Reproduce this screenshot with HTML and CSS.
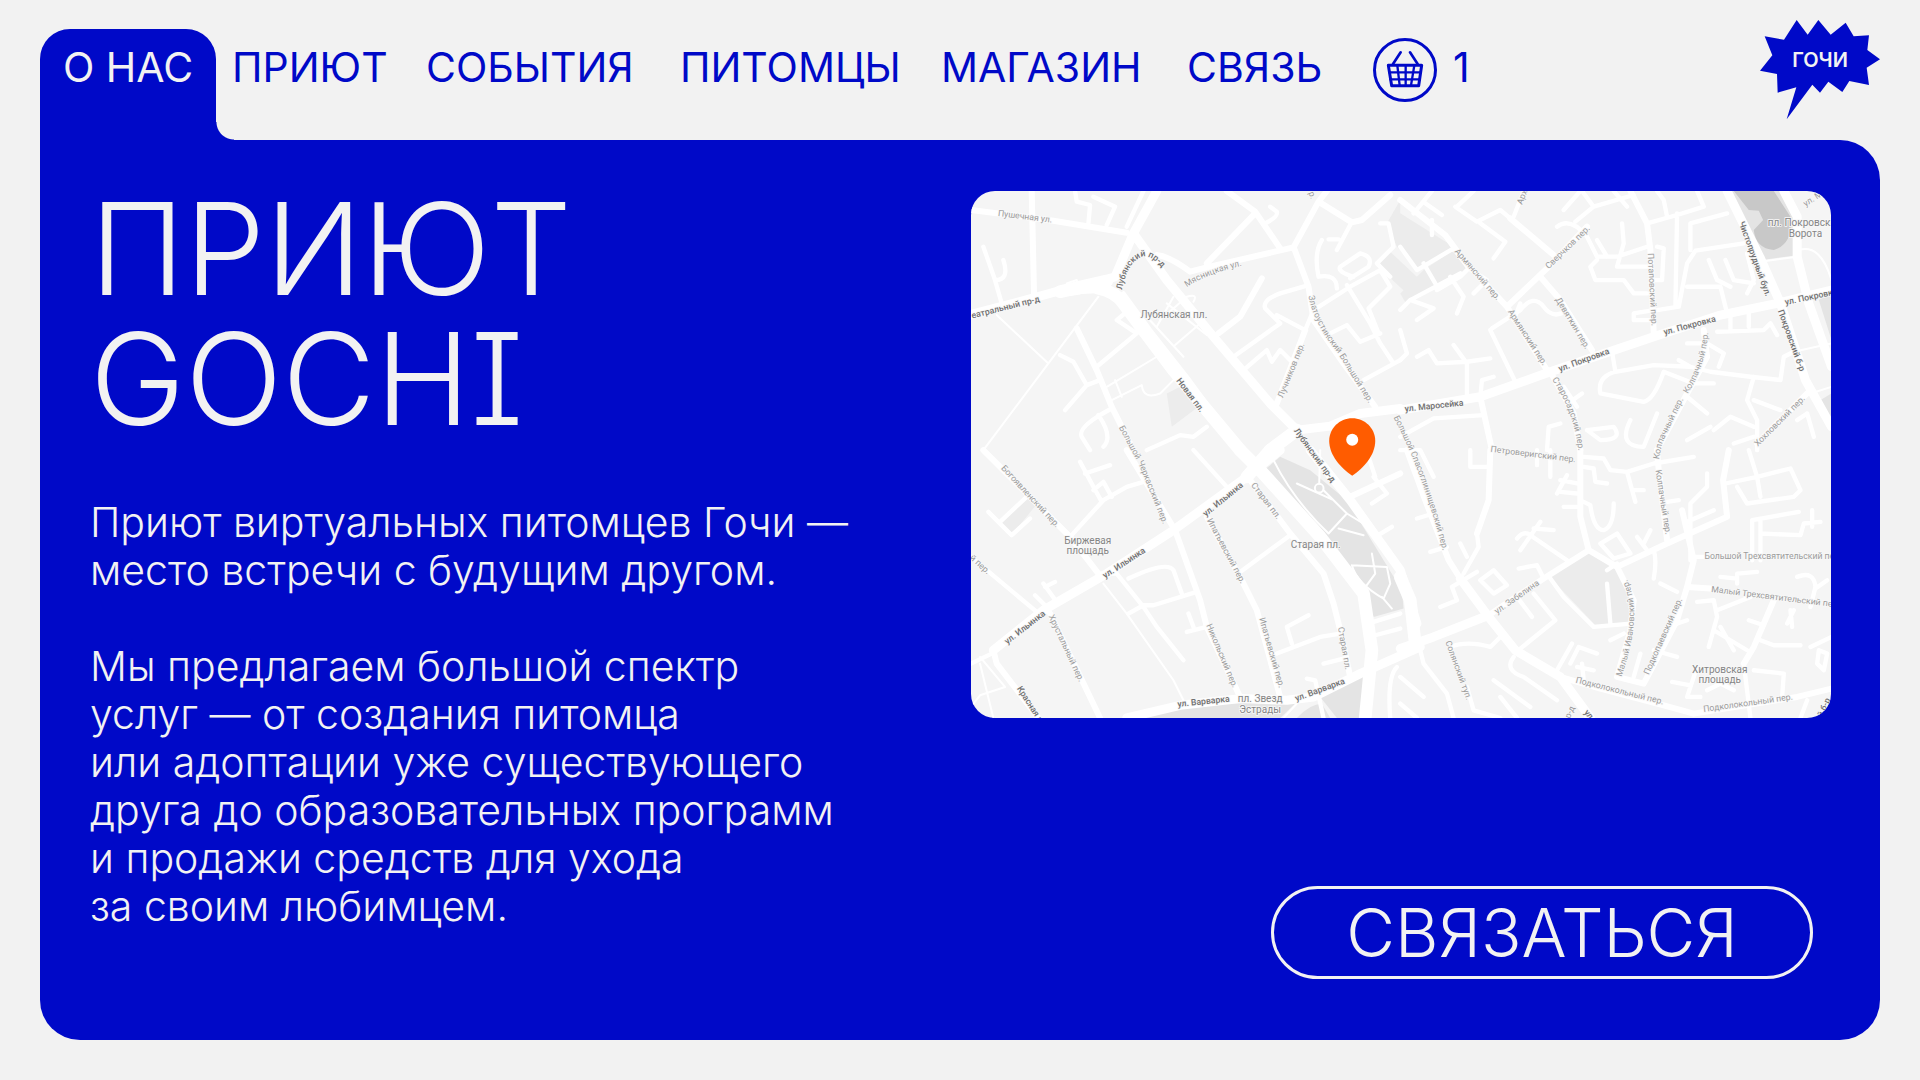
FILE: index.html
```html
<!DOCTYPE html>
<html lang="ru">
<head>
<meta charset="utf-8">
<meta name="viewport" content="width=device-width, initial-scale=1">
<title>Приют Gochi — О нас</title>
<link rel="stylesheet" href="styles.css">
</head>
<body>
<header class="header">
  <nav class="nav">
    <a class="nav-link nav-link--active" href="#about">О НАС</a>
    <a class="nav-link" href="#shelter">ПРИЮТ</a>
    <a class="nav-link" href="#events">СОБЫТИЯ</a>
    <a class="nav-link" href="#pets">ПИТОМЦЫ</a>
    <a class="nav-link" href="#shop">МАГАЗИН</a>
    <a class="nav-link" href="#contact">СВЯЗЬ</a>
    <a class="cart" href="#cart">
      <svg class="cart-icon" viewBox="0 0 192 192" fill="none" stroke="currentColor" stroke-linecap="round" stroke-linejoin="round">
        <circle cx="96" cy="96" r="91.500" stroke-width="9"/>
        <path d="M60 78 83 43M134 78 111 43" stroke-width="8"/>
        <path d="M46 82H146L137 143H56Z" stroke-width="9"/>
        <path d="M49 103H143M52 124H140M73 82 80 142M98 82V142M124 82 114 142" stroke-width="7"/>
      </svg>
      <span class="cart-count">1</span>
    </a>
  </nav>
  <a class="logo" href="#home">
    <svg class="logo-image" viewBox="0 0 360 300">
      <path class="logo-burst" d="M110 0 143 44 175 0 212 44 257 8 281 49 327 46 322 90 360 118 320 143 327 195 268 183 247 216 205 185 180 218 157 194 80 298 109 202 53 218 51 162 0 152 37 106 14 49 72 59Z"/>
      <text class="logo-text" x="180" y="141" text-anchor="middle">ГОЧИ</text>
    </svg>
  </a>
</header>

<main class="panel">
  <section class="about">
    <h1 class="title">ПРИЮТ<br>GOCHI</h1>
    <p class="text">Приют виртуальных питомцев Гочи —<br>место встречи с будущим другом.</p>
    <p class="text">Мы предлагаем большой спектр<br>услуг — от создания питомца<br>или адоптации уже существующего<br>друга до образовательных программ<br>и продажи средств для ухода<br>за своим любимцем.</p>
  </section>

  <section class="side">
    <svg class="map" viewBox="0 0 2580 1581" preserveAspectRatio="xMidYMid slice" role="img" aria-label="Карта">
      <!-- areas -->
      <g transform="translate(-33 -33)">
        <path class="lot" d="M620 640 660 620 715 680 635 740ZM1255 240 1290 215 1380 300 1340 340 1270 275ZM1280 130 1320 60 1320 100 1480 200 1380 270 1310 200ZM1390 270 1480 210 1525 265 1340 375 1320 340Z"/>
        <path class="park" d="M2310 33H2480L2515 110V225L2405 240ZM2575 360 2613 330V480ZM2580 660 2613 640V730Z"/>
        <path class="pond" d="M2320 33H2440L2490 110Q2500 190 2440 210Q2385 205 2380 150L2408 120 2395 92 2365 90Z"/>
      </g>
      <g transform="translate(-33 777)">
        <path class="park" d="M900 70 960 20 1050 60 1160 150 1325 420 1330 475 1240 500 1210 430ZM540 803 700 762 1010 755 960 803ZM1080 740 1225 665 1200 803H1130ZM1010 803Q1050 760 1085 760L1110 803Z"/>
        <path class="lot" d="M120 215 190 145 240 150 155 255ZM1765 380 1885 305 1970 355 2025 440 2010 520 1910 530 1820 435Z"/>
      </g>

      <!-- streets, north-west -->
      <g class="road" transform="translate(-33 -33)">
        <path class="w4" d="M440 303 300 335M415 325Q465 335 490 370L640 570 840 810M1010 750 930 810"/>
        <path class="w3" d="M33 403 160 370 300 332 420 325M590 33 520 160 465 290 400 310M520 160 620 300 760 470 930 670 1010 750M1010 750 1110 738 1200 700 1320 685"/>
        <path class="w2" d="M33 90 280 122 500 158M590 225Q630 230 690 275L740 262 1000 202 1075 65 1100 33M1075 65 1175 127 1205 120 1290 45M1000 200 1045 320 1060 420 1150 550 1245 680M800 33 885 95 960 205M740 250 885 100M1035 450 950 670M350 445 410 570 455 680 520 810M905 295 840 410 775 460M215 33 222 345"/>
        <path class="w1" d="M550 33 500 140M490 340 570 450 680 590 790 740M1175 125 1130 210M1105 178H1135M915 130Q955 110 950 95L930 80M1085 180Q1060 220 1075 290 1130 280 1130 325M1045 315 960 340Q905 360 915 385L960 430 820 530M950 405 1035 450 1060 390 1170 320 1260 270 1290 320 1225 385 1255 460M1260 460 1200 485 1160 435 1110 460M1160 315 1230 430 1260 490 1300 550M1210 600 1320 540M1180 290Q1130 275 1140 260L1200 220Q1240 230 1225 260L1170 295M850 570 920 510 935 545 960 510 990 540M70 200 105 300 125 370M105 300Q150 300 130 240M410 560 530 460 470 420 500 395M300 525 340 545 380 615 315 690M380 615 420 600M455 685Q350 740 365 770L390 810M415 705Q460 770 430 800M560 810 660 765 700 770 740 740M345 33 350 65 390 75 385 130M400 50 465 80 440 135M1260 130 1285 130 1300 200 1250 250 1290 290"/>
        <path class="w0" d="M110 405 265 550M415 350 265 550 70 810M440 620 590 530M465 600 485 650M455 660 545 615Q550 660 600 640L640 600M590 440 640 350M620 370 740 465M645 495 720 430M600 420 680 350Q715 340 700 365M320 310 350 300 360 340 330 345ZM560 410 670 530"/>
      </g>

      <!-- streets, north-east -->
      <g class="road" transform="translate(1287 -33)">
        <path class="w3" d="M0 690 240 650 450 575 760 470 960 405 1130 370 1293 330M980 33 1080 235 1140 370 1215 600 1293 740M1150 33 1190 110V230L1225 370 1293 560"/>
        <path class="w2" d="M0 60 135 165 190 240 320 380 440 570M320 380 440 265 560 140M330 115 460 225M420 290 480 360 575 510M690 33 740 130 750 210 760 460M240 650 275 810M450 575 520 700 540 810M910 450 920 530 860 640 770 810M1220 640 1070 790"/>
        <path class="w1" d="M0 200 50 270 160 205M0 390 30 360 180 280M40 100 95 33M75 70 125 105M95 120V165M165 80 230 125 300 90 330 115M340 110 370 33M240 130 315 185 280 235M220 33 170 80M160 205 205 265 180 290 110 330M150 290 190 350 170 400M205 265 260 300 220 340M70 250 105 310M30 360 100 385 50 420M470 140Q510 110 560 170L590 230H650L740 200M590 240 570 260 585 300H670L700 340H740M490 90 540 33M525 125 580 80 545 33M580 80 700 45M640 33 680 80M665 130 670 190 650 260H740M740 130 830 105 910 80 890 33M830 100 825 380M770 33 790 60 800 110M770 200 790 205 785 300H760M770 390 835 380 860 250 885 212 1030 190M870 210V130L980 100M860 320H960L980 400M925 240 950 300 990 320M975 240 1000 300 1060 310M1040 220 1060 300 1040 340M760 390 700 400V420H760M270 450 345 605M275 445 360 390Q400 340 430 380 460 420 500 390M340 420 360 370M200 655V545M50 530 85 510 110 550 200 545 270 535M160 495 200 550M240 650 245 600 280 590M0 540 20 520 0 450M0 770 100 715 250 705M635 515 645 575 760 555 870 560 930 575 1050 590 1140 600 1150 530 1180 515M645 575Q590 590 600 640L730 665Q760 660 790 575L880 610 940 610M835 540 870 560M860 490H920L970 520 955 560M860 650 920 700M1060 590 1040 660 1070 720V810M1060 660 1140 690M950 455 1090 450 1110 430 1130 465M990 400V450M1045 400V440M440 810 445 740 480 730M560 750 640 740Q670 780 600 780L560 750M690 720Q650 800 730 800L770 700M490 620 530 680M510 665 545 640M930 740 860 780M940 750 990 710 1060 740M1000 790 1060 770M1220 700 1190 720M1220 700 1240 770M590 180 620 230"/>
        <path class="w0" d="M1080 245 1190 230M1180 515 1293 490M1195 210Q1260 190 1293 300M1230 640 1293 620"/>
      </g>

      <!-- streets, south-west -->
      <g class="road" transform="translate(-33 777)">
        <path class="w4" d="M840 0 900 60 1080 260 1210 430 1235 600 1215 803M930 0 860 80"/>
        <path class="w3" d="M960 0 860 80 640 240 440 370 250 480 100 600M1050 0 1170 150 1320 360 1370 520M500 803 660 765 840 745 980 750 1060 740 1200 670 1380 590"/>
        <path class="w2" d="M100 600 110 640 235 803M500 0 560 100 645 240 720 450 740 530 840 740M70 0 330 260 415 370M740 200 850 400 890 480 960 740M870 90 990 250 1090 370 1120 460 1140 540 1170 680M270 490 420 803M1170 140 1320 70"/>
        <path class="w1" d="M33 320 230 485M33 640 95 610M330 260 430 150 500 110 550 95M360 35 400 110 425 155M375 70 450 45M400 120 430 95 455 140M85 185 155 255 210 205M120 215 200 140M415 370 470 370 550 470 590 530 670 630M505 385Q620 330 640 360L665 430M505 490 550 465H580L710 425M680 545 740 530M700 530 685 490M700 0 800 110M840 365 990 255M1240 80 1280 130 1235 160M1225 20 1245 80M1245 260 1295 230M950 610 1080 560 1140 550M995 580 980 530 1045 495M1090 640 1150 625M250 400 290 455M225 435 255 465M255 410 285 395M1240 515 1320 490M1245 555 1320 535M1040 685 1065 690 1090 803M1310 650Q1280 680 1290 803"/>
        <path class="w0" d="M430 400 500 490 640 690 670 750M60 640 100 803M60 620 135 710 60 735 33 770M940 30Q1000 150 1105 250L1160 190 1120 150 1010 100M1080 0 1077 100M1090 120 1160 190 1210 220M1135 235 1210 255M1175 345 1280 350 1290 400 1270 445Q1190 400 1175 345M1205 425 1245 370 1235 310M1265 440 1295 475M970 803 1010 760"/>
        <circle class="w0" cx="1077" cy="114" r="13"/>
      </g>

      <!-- streets, south-east -->
      <g class="road" transform="translate(1287 777)">
        <path class="w4" d="M0 380 30 450 45 580"/>
        <path class="w3" d="M0 595 100 560 265 495M180 385 265 500 345 600 480 680 570 803"/>
        <path class="w2" d="M265 495 430 385 565 300 650 350 800 280 980 200 968 90 985 0M20 0 75 150 145 330 180 385M270 0 265 150 230 250M540 0V200L565 300M650 350 700 450 690 540 650 680 730 700M845 180 880 330 860 410 830 510 730 700M480 680 600 715 790 765 880 790 1190 740 1293 715M1030 640 1060 590 1120 450M770 0 775 60 800 270M860 410 930 415"/>
        <path class="w1" d="M230 250 235 290 190 370M180 280 200 320M210 0V50H260M50 205 100 190M90 305 140 290M0 0 60 0 100 80M550 20 610 25 630 60 680 65 760 40 880 20M680 65 695 120 730 120M695 120 705 155M550 50 580 55 585 95 620 100M480 90 530 100M470 130 500 75M480 125 530 130M490 170H530M550 155 570 165Q580 240 610 240 640 230 640 160M350 265Q370 240 390 255L500 330M360 300 420 215M400 235 460 240M600 280 650 250 690 310 640 325ZM620 360 650 340M710 260 740 300M730 280 750 240M760 300Q770 330 760 385M860 215 940 180M870 330V160L920 110V70M800 155 835 150M975 100 1070 80 1170 55 1200 120 1180 140 1040 160 1010 110M1045 0 1070 80 1080 140M1055 330V210L1195 185M1080 210V330M1080 250 1200 255 1210 220 1260 215M1235 180V230M960 380 1010 385M1010 400V370L1070 365M1190 380Q1240 360 1245 410L1230 470M1245 415 1280 390M780 400 830 425M890 455 940 450 950 500 925 590M940 540 1040 600M960 530 1000 600M950 480 1050 440M1045 510 1090 525M1080 570 1120 585H1200M1170 480 1175 530M1160 520 1180 480M880 320H910M355 355 410 345 430 385M450 385 490 440 580 530 690 520M620 400 630 520M400 430 465 510 360 595M350 440 395 500M120 470 170 450 155 410 230 365M240 390 280 360 320 405 280 430ZM150 590Q200 570 270 590L300 560M340 620Q310 660 370 680L470 750M60 600 70 640 140 730 160 803M0 680 70 740M0 760 50 803M200 710 220 780 300 803M280 690 390 770M300 740 350 803M470 660 515 580M510 640 535 590 590 610M545 640 550 690M530 650 580 660M630 570 670 550M720 610 700 680M800 530 860 510M760 600 830 620M815 695 870 705M890 650 860 740 900 740M920 720 960 700 1000 720M1060 660 1150 670 1145 740M1030 640 1050 803M1250 640 1255 600 1280 610 1270 660ZM1230 590 1293 560M1200 803 1220 750M450 0V80M410 0V45"/>
      </g>

      <!-- street names -->
      <g class="label">
        <g transform="translate(-33 -33)">
          <text transform="translate(113 108) rotate(7)">Пушечная ул.</text>
          <text class="main" transform="translate(37 415) rotate(-14)">еатральный пр-д</text>
          <path id="lub" class="guide" d="M486 330Q500 250 545 230 575 222 612 272"/>
          <text class="main"><textPath href="#lub">Лубянский пр-д</textPath></text>
          <path id="mya" class="guide" d="M680 322Q740 280 860 254"/>
          <text><textPath href="#mya">Мясницкая ул.</textPath></text>
          <text class="place" x="541" y="415">Лубянская пл.</text>
          <text class="main" transform="translate(648 602) rotate(53)">Новая пл.</text>
          <path id="zla" class="guide" d="M1045 348Q1060 430 1130 515L1250 710"/>
          <text><textPath href="#zla">Златоустинский Большой пер.</textPath></text>
          <text transform="translate(968 655) rotate(-68)">Лучников пер.</text>
          <text class="main" transform="translate(1000 752) rotate(54)">Лубянский пр-д</text>
          <text transform="translate(1045 38) rotate(70)">р.</text>
          <path id="che" class="guide" d="M476 742 535 850 620 1060"/>
          <text><textPath href="#che">Большой Черкасский пер.</textPath></text>
          <path id="spa" class="guide" d="M1300 712Q1390 880 1455 1140"/>
          <text><textPath href="#spa">Большой Спасоглинищевский пер.</textPath></text>
        </g>
        <g transform="translate(1287 -33)">
          <text transform="translate(162 215) rotate(49)">Армянский пер.</text>
          <text transform="translate(322 395) rotate(57)">Армянский пер.</text>
          <text transform="translate(445 268) rotate(-44)">Сверчков пер.</text>
          <text transform="translate(465 358) rotate(59)">Девяткин пер.</text>
          <text transform="translate(742 220) rotate(87)">Потаповский пер.</text>
          <text class="main" transform="translate(14 695) rotate(-6)">ул. Маросейка</text>
          <text class="main" transform="translate(478 575) rotate(-20)">ул. Покровка</text>
          <text class="main" transform="translate(792 465) rotate(-15)">ул. Покровка</text>
          <text class="main" transform="translate(1155 375) rotate(-12)">ул. Покровка</text>
          <text class="main" transform="translate(1015 128) rotate(70)">Чистопрудный бул.</text>
          <text class="main" transform="translate(1132 393) rotate(70)">Покровский б-р</text>
          <path id="sta" class="guide" d="M455 598Q525 700 536 830"/>
          <text><textPath href="#sta">Старосадский пер.</textPath></text>
          <path id="kol" class="guide" d="M862 642Q920 550 925 435"/>
          <text><textPath href="#kol">Колпачный пер.</textPath></text>
          <path id="kop" class="guide" d="M776 838 785 790 860 635"/>
          <text><textPath href="#kop">Колпачный пер.</textPath></text>
          <text transform="translate(1072 800) rotate(-45)">Хохловский пер.</text>
          <text transform="translate(365 75) rotate(-68)">Арх</text>
          <text transform="translate(1215 80) rotate(-32)">ул. Макаренко</text>
          <text class="place" x="1102" y="139">пл. Покровские</text>
          <text class="place" x="1165" y="171">Ворота</text>
        </g>
        <g transform="translate(-33 777)">
          <text transform="translate(122 55) rotate(47)">Богоявленский пер.</text>
          <text class="place" x="383" y="280" text-anchor="middle">Биржевая</text>
          <text class="place" x="383" y="312" text-anchor="middle">площадь</text>
          <text transform="translate(28 325) rotate(42)">й пер.</text>
          <text class="main" transform="translate(435 385) rotate(-33)">ул. Ильинка</text>
          <text class="main" transform="translate(737 200) rotate(-39)">ул. Ильинка</text>
          <text class="main" transform="translate(142 583) rotate(-38)">ул. Ильинка</text>
          <text transform="translate(265 498) rotate(65)">Хрустальный пер.</text>
          <text class="main" transform="translate(170 715) rotate(57)">Красная пл.</text>
          <text transform="translate(872 105) rotate(53)">Старая пл.</text>
          <text class="place" x="992" y="294">Старая пл.</text>
          <text transform="translate(740 210) rotate(62)">Ипатьевский пер.</text>
          <text transform="translate(897 505) rotate(74)">Ипатьевский пер.</text>
          <text transform="translate(738 525) rotate(67)">Никольский пер.</text>
          <text transform="translate(1133 532) rotate(80)">Старая пл.</text>
          <text class="main" transform="translate(653 770) rotate(-6)">ул. Варварка</text>
          <text class="main" transform="translate(1008 753) rotate(-20)">ул. Варварка</text>
          <text class="place" x="900" y="756" text-anchor="middle">пл. Звезд</text>
          <text class="place" x="900" y="788" text-anchor="middle">Эстрады</text>
        </g>
        <g transform="translate(1287 777)">
          <text transform="translate(270 5) rotate(7)">Петроверигский пер.</text>
          <text transform="translate(290 492) rotate(-35)">ул. Забелина</text>
          <text transform="translate(765 60) rotate(81)">Колпачный пер.</text>
          <text x="912" y="325">Большой Трехсвятительский пер.</text>
          <text transform="translate(932 425) rotate(7)">Малый Трехсвятительский пер.</text>
          <path id="iva" class="guide" d="M663 680Q735 480 672 372"/>
          <text><textPath href="#iva">Малый Ивановский пер.</textPath></text>
          <text transform="translate(745 675) rotate(-66)">Подкопаевский пер.</text>
          <text transform="translate(135 575) rotate(70)">Солянский туп.</text>
          <text transform="translate(525 697) rotate(14)">Подколокольный пер.</text>
          <text transform="translate(910 785) rotate(-8)">Подколокольный пер.</text>
          <text class="place" x="958" y="668" text-anchor="middle">Хитровская</text>
          <text class="place" x="958" y="699" text-anchor="middle">площадь</text>
          <text transform="translate(508 806) rotate(-65)">р-д</text>
          <text class="main" transform="translate(550 787) rotate(50)">ул.</text>
          <text class="main" transform="translate(1265 802) rotate(-65)">й б-р</text>
        </g>
      </g>

      <!-- location pin -->
      <path class="pin" d="M1143 681C1181 681 1212 711 1212 749C1212 793 1176 832 1143 854C1110 832 1074 793 1074 749C1074 711 1105 681 1143 681Z"/>
      <circle class="pin-dot" cx="1143" cy="746" r="18"/>
    </svg>
    <button class="contact" type="button">СВЯЗАТЬСЯ</button>
  </section>
</main>
</body>
</html>
```
FILE: styles.css
```css
:root {
  --blue: #0009c8;
  --paper: #f2f2f2;
}

* {
  box-sizing: border-box;
}

body {
  margin: 0;
  min-height: 100vh;
  display: flex;
  flex-direction: column;
  padding: 0 40px 40px;
  background: var(--paper);
  color: var(--blue);
  font-family: Inter, "Liberation Sans", sans-serif;
}

a {
  color: inherit;
  text-decoration: none;
}

/* Header */
.header {
  display: flex;
  justify-content: space-between;
  height: 140px;
}

.nav {
  display: grid;
  grid-template-columns: 192px 194px 254px 261px 246px 186px auto;
  padding-top: 29px;
}

.nav-link {
  padding-top: 14px;
  font-size: 41px;
  line-height: 48px;
  white-space: nowrap;
}

.nav-link--active {
  position: relative;
  width: 176px;
  text-align: center;
  border-radius: 30px 30px 0 0;
  background: var(--blue);
  color: var(--paper);
}

/* inner corner between the tab and the panel */
.nav-link--active::after {
  content: "";
  position: absolute;
  left: 100%;
  bottom: 0;
  width: 18px;
  height: 18px;
  background: radial-gradient(circle at 100% 0, transparent 17px, var(--blue) 18px);
}

.cart {
  display: flex;
  align-items: flex-start;
  gap: 16px;
  padding-top: 9px;
}

.cart-icon {
  width: 64px;
  height: 64px;
}

.cart-count {
  padding-top: 5px;
  font-size: 41px;
  line-height: 48px;
}

.logo {
  padding-top: 20px;
}

.logo-image {
  display: block;
  width: 120px;
  height: 100px;
}

.logo-burst {
  fill: var(--blue);
}

.logo-text {
  fill: var(--paper);
  font-size: 60px;
  font-weight: 600;
}

/* Panel */
.panel {
  flex: 1;
  display: grid;
  grid-template-columns: 1fr 1fr;
  column-gap: 20px;
  padding: 44px 49px 61px 50px;
  border-radius: 0 40px 40px 40px;
  background: var(--blue);
  color: var(--paper);
}

.title {
  margin: 0 0 54px;
  font-size: 128px;
  font-weight: 300;
  line-height: 130px;
  font-feature-settings: "cv08";
}

.text {
  margin: 0 0 48px;
  font-size: 41px;
  font-weight: 300;
  line-height: 48px;
  white-space: nowrap;
}

.side {
  display: flex;
  flex-direction: column;
  justify-content: space-between;
  align-items: flex-end;
  padding-top: 7px;
}

.contact {
  min-width: 542px;
  height: 93px;
  margin-right: 18px;
  padding: 0 60px;
  border: 3px solid var(--paper);
  border-radius: 48px;
  background: none;
  color: inherit;
  font-family: inherit;
  font-size: 67px;
  font-weight: 300;
  line-height: 80px;
  cursor: pointer;
}

/* Map */
.map {
  display: block;
  width: 100%;
  aspect-ratio: 860 / 527;
  border-radius: 24px;
  background: #f5f5f5;
}

.lot { fill: #ececec; }
.park { fill: #e4e4e4; }
.pond { fill: #c8c8c8; }

.road {
  fill: none;
  stroke: #fff;
  stroke-linecap: round;
  stroke-linejoin: round;
}

.w0 { stroke-width: 6px; }
.w1 { stroke-width: 13px; }
.w2 { stroke-width: 18px; }
.w3 { stroke-width: 27px; }
.w4 { stroke-width: 38px; }

.label {
  fill: #9c9c9c;
  stroke: #f8f8f8;
  stroke-width: 5px;
  paint-order: stroke;
  font-family: Roboto, sans-serif;
  font-size: 26px;
}

.main {
  fill: #6f6f6f;
  font-weight: 500;
}

.place {
  fill: #858585;
  font-size: 30px;
}

.guide {
  fill: none;
  stroke: none;
}

.pin { fill: #ff5c00; }
.pin-dot { fill: #fff; }
```
